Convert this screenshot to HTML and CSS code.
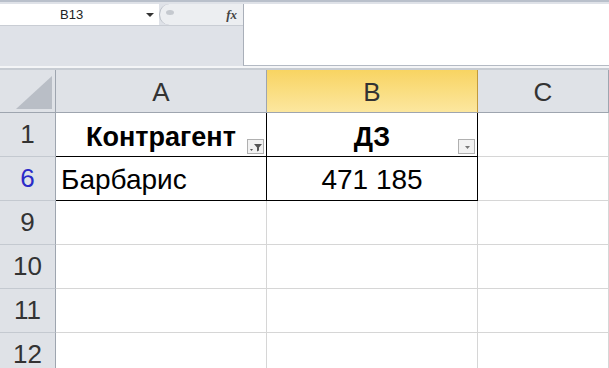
FILE: index.html
```html
<!DOCTYPE html>
<html lang="ru">
<head>
    <meta charset="UTF-8">
    <meta name="viewport" content="width=device-width, initial-scale=1.0">
    <title>Лист1</title>
    <link rel="stylesheet" href="styles.css">
</head>
<body>
    <!-- строка формул -->
    <div class="formula-bar">
        <div class="left-part">
            <div class="name-row">
                <div class="name-box">
                    <span class="name-text">B13</span>
                    <span class="name-arrow"></span>
                </div>
                <div class="grip"><span class="grip-dot"></span></div>
                <div class="fx">fx</div>
            </div>
        </div>
        <div class="formula-input"></div>
    </div>
    <div class="bar-gap"></div>

    <!-- сетка -->
    <div class="sheet">
        <div class="cell corner"><span class="corner-tri"></span></div>
        <div class="cell col-head">A</div>
        <div class="cell col-head selected">B</div>
        <div class="cell col-head">C</div>

        <div class="cell row-head">1</div>
        <div class="cell data bold center bb br">Контрагент<span class="filter-btn"><svg width="14" height="12" viewBox="0 0 14 12"><path d="M5 3h8l-3 3.5v3l-2 1v-4z" fill="#555"/><path d="M1 8h3l-1.5 2z" fill="#555"/></svg></span></div>
        <div class="cell data bold center bb br">ДЗ<span class="filter-btn"><svg width="14" height="12" viewBox="0 0 14 12"><path d="M5 5h5l-2.5 3z" fill="#777"/></svg></span></div>
        <div class="cell data"></div>

        <div class="cell row-head blue">6</div>
        <div class="cell data left bb br">Барбарис</div>
        <div class="cell data center bb br">471 185</div>
        <div class="cell data"></div>

        <div class="cell row-head">9</div>
        <div class="cell data"></div>
        <div class="cell data"></div>
        <div class="cell data"></div>

        <div class="cell row-head">10</div>
        <div class="cell data"></div>
        <div class="cell data"></div>
        <div class="cell data"></div>

        <div class="cell row-head">11</div>
        <div class="cell data"></div>
        <div class="cell data"></div>
        <div class="cell data"></div>

        <div class="cell row-head">12</div>
        <div class="cell data"></div>
        <div class="cell data"></div>
        <div class="cell data"></div>
    </div>
</body>
</html>
```

FILE: styles.css
```css
body {
    margin: 0;
    width: 609px;
    height: 368px;
    overflow: hidden;
    font-family: "Liberation Sans", Arial, sans-serif;
    background-color: #ffffff;
}

.formula-bar {
    display: flex;
    height: 64px;
    border-top: 2px solid #b9c0cb;
    background-color: #dfe2e8;
}

.left-part {
    width: 243px;
    padding-top: 2px;
}

.name-row {
    display: flex;
    height: 21px;
    border-bottom: 1px solid #c9cdd4;
}

.name-box {
    position: relative;
    width: 159px;
    background-color: #ffffff;
    font-size: 13px;
    color: #222222;
    line-height: 21px;
}

.name-text {
    position: absolute;
    left: 60px;
}

.name-arrow {
    position: absolute;
    left: 146px;
    top: 9px;
    border-left: 4px solid transparent;
    border-right: 4px solid transparent;
    border-top: 4px solid #333333;
}

.grip {
    width: 22px;
    background-color: #eceef1;
    border-radius: 11px 0 0 11px;
    border-left: 1px solid #b8bdc5;
    position: relative;
}

.grip-dot {
    position: absolute;
    left: 6px;
    top: 6px;
    width: 8px;
    height: 5px;
    border-radius: 50%;
    background-color: #c5c9cf;
}

.fx {
    flex: 1;
    background-color: #eceef1;
    text-align: right;
    padding-right: 6px;
    font-family: "Liberation Serif", serif;
    font-style: italic;
    font-weight: bold;
    font-size: 13px;
    line-height: 21px;
    color: #444444;
}

.formula-input {
    flex: 1;
    margin-top: 2px;
    background-color: #ffffff;
    border-left: 1px solid #a9afb9;
    border-bottom: 1px solid #b4bac4;
}

.bar-gap {
    height: 2px;
    background-color: #f4f5f7;
    border-bottom: 2px solid #c7ccd3;
}

.sheet {
    display: grid;
    grid-template-columns: 56px 211px 211px 131px;
    grid-template-rows: 43px repeat(6, 44px);
}

.cell {
    box-sizing: border-box;
    border-right: 1px solid #d6d6d6;
    border-bottom: 1px solid #d6d6d6;
    position: relative;
    font-size: 26px;
    display: flex;
    align-items: center;
}

.corner {
    background-color: #dfe2e7;
    border-right: 1px solid #9ea5af;
    border-bottom: 1px solid #9ea5af;
}

.corner-tri {
    position: absolute;
    right: 3px;
    bottom: 3px;
    width: 0;
    height: 0;
    border-left: 36px solid transparent;
    border-bottom: 33px solid #b9bec6;
}

.col-head {
    justify-content: center;
    background-color: #dfe2e7;
    color: #333333;
    border-right: 1px solid #9ea5af;
    border-bottom: 1px solid #9ea5af;
    padding-top: 2px;
}

.col-head.selected {
    background: linear-gradient(#f8d462, #fce79f);
    border-right-color: #c29a3c;
}

.row-head {
    justify-content: center;
    background-color: #dfe2e7;
    color: #333333;
    border-right: 1px solid #9ea5af;
    border-bottom: 1px solid #c4c9d0;
}

.row-head.blue {
    color: #2b2bc8;
}

.data {
    color: #000000;
    font-size: 28px;
    padding-top: 2px;
}

.center {
    justify-content: center;
}

.left {
    padding-left: 5px;
}

.bold {
    font-weight: bold;
    font-size: 27px;
    padding-top: 6px;
    padding-bottom: 0;
}

.bb {
    border-bottom: 1px solid #000000;
}

.br {
    border-right: 1px solid #000000;
}

.filter-btn {
    position: absolute;
    right: 2px;
    bottom: 2px;
    width: 15px;
    height: 13px;
    border: 1px solid #b0b0b0;
    background-color: #f2f2f2;
    display: flex;
    align-items: center;
    justify-content: center;
}
```
